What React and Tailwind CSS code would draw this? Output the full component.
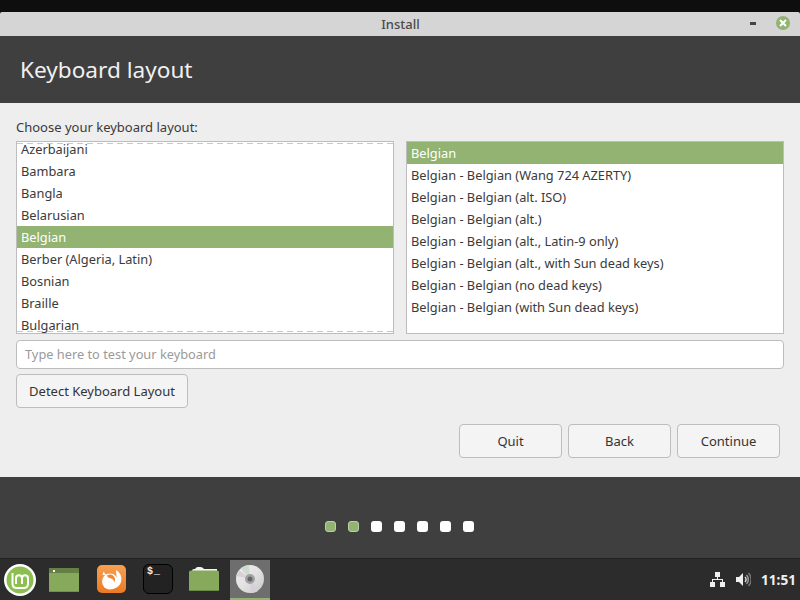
import React from "react";

const left = ["Azerbaijani","Bambara","Bangla","Belarusian","Belgian","Berber (Algeria, Latin)","Bosnian","Braille","Bulgarian"];
const right = ["Belgian","Belgian - Belgian (Wang 724 AZERTY)","Belgian - Belgian (alt. ISO)","Belgian - Belgian (alt.)","Belgian - Belgian (alt., Latin-9 only)","Belgian - Belgian (alt., with Sun dead keys)","Belgian - Belgian (no dead keys)","Belgian - Belgian (with Sun dead keys)"];

function Row({ text, sel }) {
  return (
    <div className={"h-[22px] leading-[22px] px-[4px] whitespace-nowrap " + (sel ? "bg-[#92b372] text-white" : "")}>{text}</div>
  );
}

function Btn({ className, children }) {
  return (
    <div className={"h-[34px] pt-[1px] border border-[#bdbdbd] rounded-[4px] bg-[#f4f4f4] flex items-center justify-center text-[#333] text-[13px] " + className}>{children}</div>
  );
}

function Mint() {
  return (
    <svg width="32" height="32" viewBox="0 0 32 32" className="block">
      <circle cx="16" cy="16" r="16" fill="#fff" />
      <circle cx="16" cy="16" r="13.500" fill="#8cbf4f" />
      <path d="M8.500 9v10.500c0 2.800 1.800 4.500 4.500 4.500h6.500c2.800 0 4.500-1.700 4.500-4.500V14.500c0-2-1.300-3.200-3-3.200s-3 1.200-3 3.200V20M18 14.500c0-2-1.300-3.200-3-3.200s-3 1.200-3 3.200V20" fill="none" stroke="#fff" strokeWidth="2" />
    </svg>
  );
}

function GreenWindow() {
  return (
    <svg width="30" height="24" viewBox="0 0 30 24" className="block">
      <rect width="30" height="24" fill="#86a95c" />
      <rect width="30" height="5" fill="#667f45" />
      <rect x="0" y="23" width="30" height="1" fill="#739049" />
      <rect x="4" y="2" width="2" height="2" fill="#fff" />
    </svg>
  );
}

function Firefox() {
  return (
    <svg width="29" height="28" viewBox="0 0 29 28" className="block">
      <defs>
        <linearGradient id="ffg" x1="0" y1="0" x2="0" y2="1">
          <stop offset="0" stopColor="#f8a050" />
          <stop offset="1" stopColor="#ec7a22" />
        </linearGradient>
      </defs>
      <rect width="29" height="28" rx="5" fill="url(#ffg)" />
      <circle cx="13" cy="16.500" r="8" fill="#fff" />
      <path d="M19 5c4 2.500 6 6 5.300 10.500-.700 4.500-4 8-9.300 8.500 3-1.500 5-4.500 5-8 0-4-1-8-1-11z" fill="#fff" />
      <path d="M10 10.500c2.500-1.500 5-1 6.500.500 1.800 1.800 2 4.500.800 6.300-.500-2.300-1.800-3.800-4-4-1.300-.200-2.800-1-3.300-2.800z" fill="#f08a35" />
      <path d="M5.500 10 6.500 6.500 9 10z" fill="#fff" />
    </svg>
  );
}

function Terminal() {
  return (
    <div className="w-[30px] h-[30px] rounded-[6px] bg-[#222222] border border-black font-['Liberation_Mono',monospace] text-[10px] leading-[12px] text-[#f0f0f0] pl-[3px] pt-[1px] font-bold tracking-[1px]">$_</div>
  );
}

function Folder() {
  return (
    <svg width="30" height="24" viewBox="0 0 30 24" className="block">
      <path d="M3 4 Q3 2 5 2 H6 Q7 0 9 0 H11 Q13 0 14 1 L15 2 H28 V6 H3 Z" fill="#f4f4f4" />
      <path d="M0 5 Q0 3.500 2 3.500 H28 Q30 3.500 30 5 V24 H0 Z" fill="#86a95c" />
      <rect y="23" width="30" height="1" fill="#6c8a49" />
    </svg>
  );
}

function Cd() {
  return (
    <svg width="28" height="28" viewBox="0 0 28 28" className="block">
      <defs>
        <linearGradient id="cdg" x1="0" y1="0" x2="1" y2="1">
          <stop offset="0" stopColor="#efefef" />
          <stop offset="0.500" stopColor="#e2e2e2" />
          <stop offset="1" stopColor="#c8c8c8" />
        </linearGradient>
      </defs>
      <circle cx="14" cy="14" r="14" fill="url(#cdg)" />
      <path d="M14 14 L5 3.500 A14 14 0 0 1 13 0 Z" fill="#cfdad0" />
      <path d="M14 14 L0.500 11 A14 14 0 0 1 3 5 Z" fill="#dccfd8" />
      <path d="M14 14 L22 26 A14 14 0 0 1 15 28 Z" fill="#d8cfd8" />
      <circle cx="14" cy="14" r="5" fill="#a2a2a2" />
      <circle cx="14" cy="14" r="2.500" fill="#666" />
    </svg>
  );
}

function Net() {
  return (
    <svg width="15" height="15" viewBox="0 0 15 15" fill="#f0f0f0" className="block">
      <rect x="5" y="0" width="5" height="5" />
      <rect x="0" y="10" width="5" height="5" />
      <rect x="10" y="10" width="5" height="5" />
      <path d="M7 5h1v2h5v3h-1V8H3v2H2V7h5z" />
    </svg>
  );
}

function Vol() {
  return (
    <svg width="15" height="15" viewBox="0 0 15 15" className="block">
      <path d="M0 5h3l4-4v13l-4-4H0z" fill="#f0f0f0" />
      <path d="M9 5a3.500 3.500 0 0 1 0 5" fill="none" stroke="#d8d8d8" strokeWidth="1.500" />
      <path d="M10.500 3a6.500 6.500 0 0 1 0 9" fill="none" stroke="#a0a0a0" strokeWidth="1.500" />
      <path d="M12.500 1a9.500 9.500 0 0 1 0 13" fill="none" stroke="#777" strokeWidth="1.500" />
    </svg>
  );
}

export default function App() {
  return (
    <div className="w-[800px] h-[600px] flex flex-col overflow-hidden font-['Noto_Sans',sans-serif] text-[12.8px] text-[#3a3a3a] bg-[#0e0e0e]">
      <div className="h-[12px]" />
      <div className="h-[24px] bg-[#d5d5d5] rounded-t-[2px] flex items-center relative">
        <div className="flex-1 text-center text-[#4a4a4a] text-[13px] font-medium pl-[1px] pt-[2px]">Install</div>
        <div className="absolute left-[750px] top-[10px] w-[6px] h-[3px] bg-[#444]" />
        <div className="absolute left-[776px] top-[4px] w-[14px] h-[14px] rounded-full bg-[#92b372] flex items-center justify-center">
          <svg width="8" height="8" viewBox="0 0 8 8"><path d="M1 1l6 6M7 1l-6 6" stroke="#fff" strokeWidth="2" /></svg>
        </div>
      </div>
      <div className="h-[67px] bg-[#3f3f3f] flex items-center pl-[20px] text-[#f0f0f0] text-[22.6px]">Keyboard layout</div>
      <div className="h-[374px] bg-[#eeeeee] px-[16px] pt-[15px] flex flex-col">
        <div className="h-[19px] leading-[19px] text-[13px]">Choose your keyboard layout:</div>
        <div className="flex gap-[12px] mt-[4px] h-[193px]">
          <div className="relative w-[378px] h-[193px] border border-[#bdbdbd] bg-white overflow-hidden">
            <div className="-mt-[4px]">
              {left.map((t) => <Row key={t} text={t} sel={t === "Belgian"} />)}
            </div>
            <div className="absolute left-0 right-0 top-[1px] h-px bg-[repeating-linear-gradient(90deg,#c8c8c8_0,#c8c8c8_6px,transparent_6px,transparent_10px)]" />
            <div className="absolute left-0 right-0 bottom-[1px] h-px bg-[repeating-linear-gradient(90deg,#c8c8c8_0,#c8c8c8_6px,transparent_6px,transparent_10px)]" />
          </div>
          <div className="w-[378px] h-[193px] border border-[#bdbdbd] bg-white overflow-hidden">
            {right.map((t, i) => <Row key={t} text={t} sel={i === 0} />)}
          </div>
        </div>
        <div className="mt-[6px] h-[29px] border border-[#bdbdbd] rounded-[4px] bg-white flex items-center pl-[8px] text-[#9a9a9a]">Type here to test your keyboard</div>
        <Btn className="mt-[5px] w-[172px]">Detect Keyboard Layout</Btn>
        <div className="mt-[16px] flex justify-end gap-[6px] pr-[4px]">
          <Btn className="w-[103px]">Quit</Btn>
          <Btn className="w-[103px]">Back</Btn>
          <Btn className="w-[103px]">Continue</Btn>
        </div>
      </div>
      <div className="h-[81px] bg-[#3f3f3f] flex justify-center gap-[12px] pt-[44px] pr-[1px]">
        {[1,1,0,0,0,0,0].map((g, i) => (
          <div key={i} className={"w-[11px] h-[11px] rounded-[3px] " + (g ? "bg-[#92b372] border border-[#bcd0a8]" : "bg-white")} />
        ))}
      </div>
      <div className="h-[42px] bg-[#2c2c2c] border-t border-[#232323] flex items-start text-[#f0f0f0]">
        <div className="ml-[4px] mt-[5px]"><Mint /></div>
        <div className="ml-[13px] mt-[9px]"><GreenWindow /></div>
        <div className="ml-[18px] mt-[6px]"><Firefox /></div>
        <div className="ml-[17px] mt-[5px]"><Terminal /></div>
        <div className="ml-[16px] mt-[8px]"><Folder /></div>
        <div className="ml-[11px] mt-[1px] w-[40px] h-[40px] bg-[#6e6e6e] border-b-[2px] border-[#92b372] flex items-center justify-center"><Cd /></div>
        <div className="ml-auto h-[41px] flex items-center">
          <Net />
          <div className="ml-[11px]"><Vol /></div>
          <div className="ml-[10px] mr-[4px] pt-[2px] text-[13.6px] font-bold text-[#f0f0f0]">11:51</div>
        </div>
      </div>
    </div>
  );
}
